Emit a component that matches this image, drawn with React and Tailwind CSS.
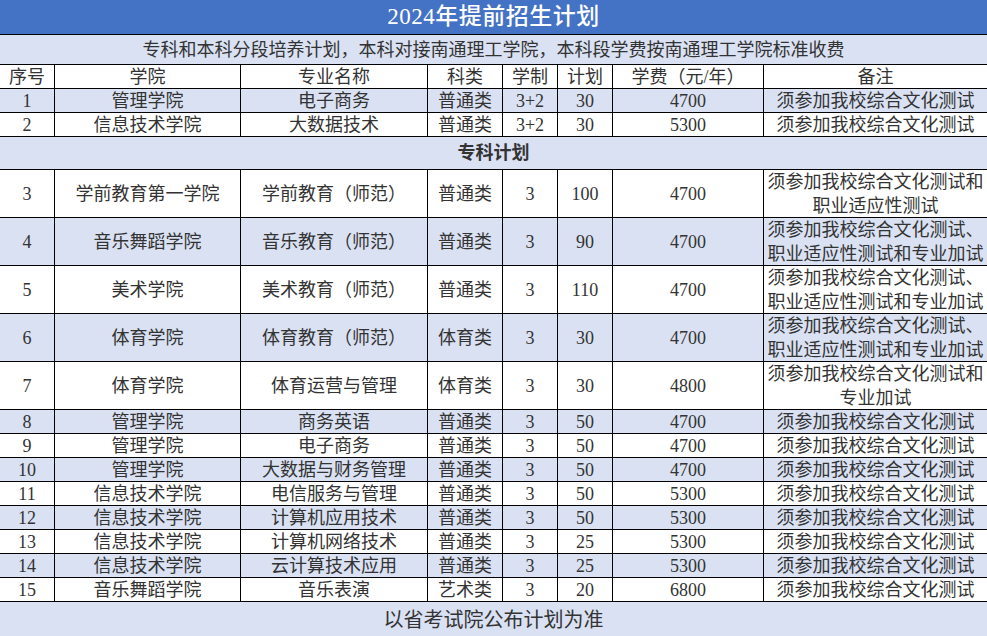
import React from "react";

// 列宽：序号 / 学院 / 专业名称 / 科类 / 学制 / 计划 / 学费 / 备注
const COLS = "grid grid-cols-[54px_185px_186px_74px_54px_54px_150px_223px] gap-px";

const TOP_ROWS = [
  ["1", "管理学院", "电子商务", "普通类", "3+2", "30", "4700", ["须参加我校综合文化测试"]],
  ["2", "信息技术学院", "大数据技术", "普通类", "3+2", "30", "5300", ["须参加我校综合文化测试"]],
];

const ROWS = [
  ["3", "学前教育第一学院", "学前教育（师范）", "普通类", "3", "100", "4700", ["须参加我校综合文化测试和", "职业适应性测试"]],
  ["4", "音乐舞蹈学院", "音乐教育（师范）", "普通类", "3", "90", "4700", ["须参加我校综合文化测试、", "职业适应性测试和专业加试"]],
  ["5", "美术学院", "美术教育（师范）", "普通类", "3", "110", "4700", ["须参加我校综合文化测试、", "职业适应性测试和专业加试"]],
  ["6", "体育学院", "体育教育（师范）", "体育类", "3", "30", "4700", ["须参加我校综合文化测试、", "职业适应性测试和专业加试"]],
  ["7", "体育学院", "体育运营与管理", "体育类", "3", "30", "4800", ["须参加我校综合文化测试和", "专业加试"]],
  ["8", "管理学院", "商务英语", "普通类", "3", "50", "4700", ["须参加我校综合文化测试"]],
  ["9", "管理学院", "电子商务", "普通类", "3", "50", "4700", ["须参加我校综合文化测试"]],
  ["10", "管理学院", "大数据与财务管理", "普通类", "3", "50", "4700", ["须参加我校综合文化测试"]],
  ["11", "信息技术学院", "电信服务与管理", "普通类", "3", "50", "5300", ["须参加我校综合文化测试"]],
  ["12", "信息技术学院", "计算机应用技术", "普通类", "3", "50", "5300", ["须参加我校综合文化测试"]],
  ["13", "信息技术学院", "计算机网络技术", "普通类", "3", "25", "5300", ["须参加我校综合文化测试"]],
  ["14", "信息技术学院", "云计算技术应用", "普通类", "3", "25", "5300", ["须参加我校综合文化测试"]],
  ["15", "音乐舞蹈学院", "音乐表演", "艺术类", "3", "20", "6800", ["须参加我校综合文化测试"]],
];

const Row = ({ cells, light }) => {
  const tall = cells[7].length > 1;
  const bg = light ? "bg-[#d9e1f2]" : "bg-white";
  return (
    <div className={COLS}>
      {cells.map((c, i) => (
        <div
          key={i}
          className={`${bg} ${tall ? "h-[47px]" : "h-[23px]"} flex flex-col items-center justify-center text-center whitespace-nowrap`}
        >
          {Array.isArray(c) ? c.map((line, j) => <div key={j}>{line}</div>) : c}
        </div>
      ))}
    </div>
  );
};

export default function App() {
  return (
    <div
      className="w-[987px] h-[636px] bg-black flex flex-col gap-px text-[18px] leading-[24px] text-[#333] overflow-hidden"
      style={{ fontFamily: '"Liberation Serif", "Noto Sans CJK SC", serif' }}
    >
      {/* 标题 */}
      <div className="h-[34px] bg-[#4472c4] text-white text-[23px] font-medium tracking-[0.5px] flex items-center justify-center">
        2024年提前招生计划
      </div>
      <div className="h-[29px] bg-[#d9e1f2] flex items-center justify-center">
        专科和本科分段培养计划，本科对接南通理工学院，本科段学费按南通理工学院标准收费
      </div>

      {/* 表头 */}
      <div className={COLS}>
        {["序号", "学院", "专业名称", "科类", "学制", "计划", "学费（元/年）", "备注"].map((h) => (
          <div key={h} className="bg-white h-[23px] flex items-center justify-center">
            {h}
          </div>
        ))}
      </div>

      {TOP_ROWS.map((r, i) => (
        <Row key={r[0]} cells={r} light={i % 2 === 0} />
      ))}

      <div className="h-[32px] bg-[#d9e1f2] flex items-center justify-center font-bold">专科计划</div>

      {ROWS.map((r, i) => (
        <Row key={r[0]} cells={r} light={i % 2 === 1} />
      ))}

      {/* 底部说明 */}
      <div className="h-[34px] bg-[#d9e1f2] flex items-center justify-center text-[20px] pt-[2px]">
        以省考试院公布计划为准
      </div>
    </div>
  );
}
